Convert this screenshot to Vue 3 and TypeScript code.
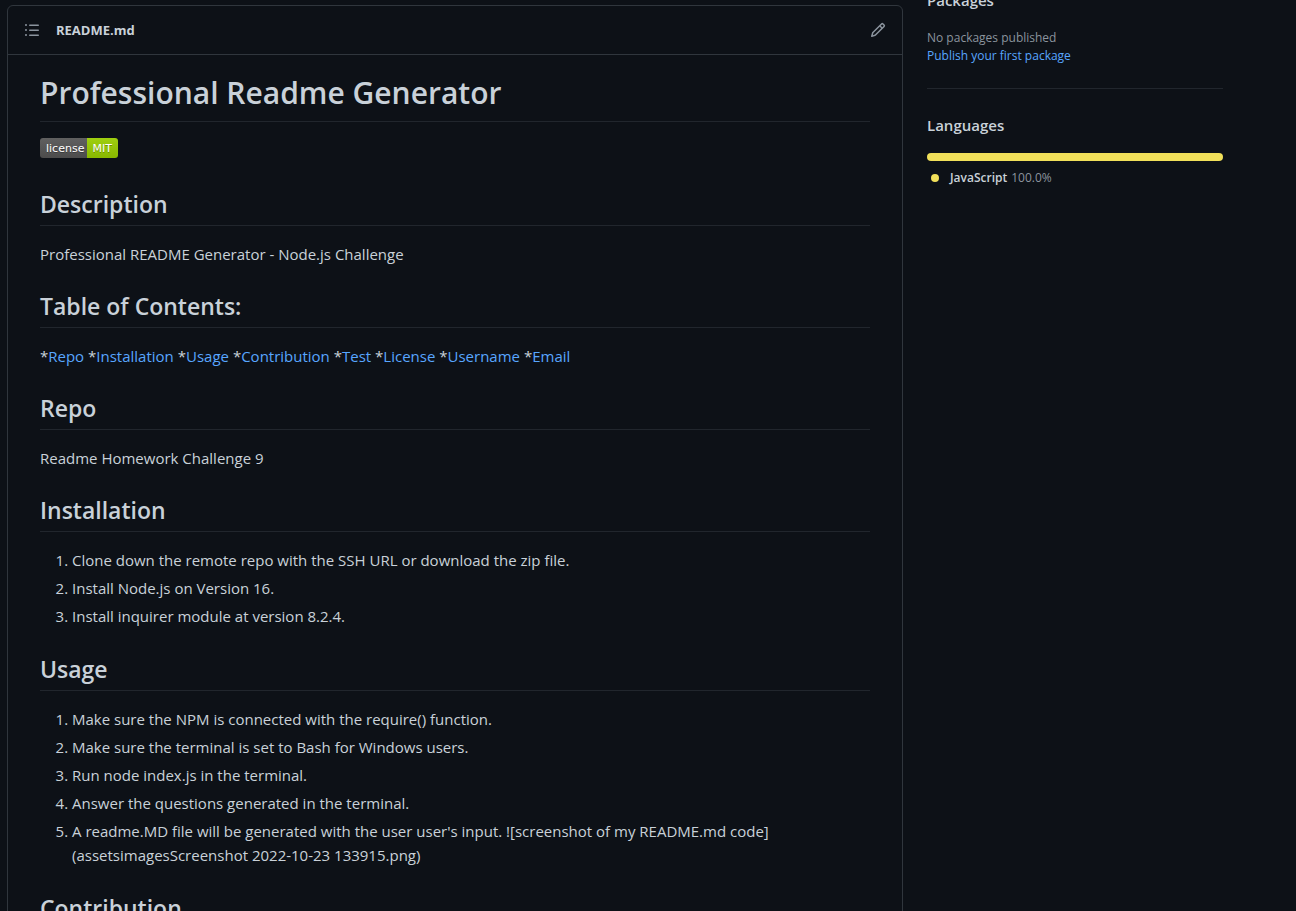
<script setup lang="ts">
interface Section {
  title: string
  text?: string
  toc?: boolean
  steps?: string[]
}

const toc: string[] = ['Repo', 'Installation', 'Usage', 'Contribution', 'Test', 'License', 'Username', 'Email']

const sections: Section[] = [
  { title: 'Description', text: 'Professional README Generator - Node.js Challenge' },
  { title: 'Table of Contents:', toc: true },
  { title: 'Repo', text: 'Readme Homework Challenge 9' },
  {
    title: 'Installation',
    steps: [
      'Clone down the remote repo with the SSH URL or download the zip file.',
      'Install Node.js on Version 16.',
      'Install inquirer module at version 8.2.4.',
    ],
  },
  {
    title: 'Usage',
    steps: [
      'Make sure the NPM is connected with the require() function.',
      'Make sure the terminal is set to Bash for Windows users.',
      'Run node index.js in the terminal.',
      'Answer the questions generated in the terminal.',
      "A readme.MD file will be generated with the user user's input. ![screenshot of my README.md code](assetsimagesScreenshot 2022-10-23 133915.png)",
    ],
  },
  { title: 'Contribution' },
]

const languages = [{ name: 'JavaScript', share: 100 }]
</script>

<template>
  <div class="page">
    <main class="readme">
      <header class="bar">
        <button class="icon-button" type="button" aria-label="Outline">
          <svg width="16" height="16" viewBox="0 0 16 16" fill="currentColor" aria-hidden="true">
            <path d="M2 4a1 1 0 1 0 0-2 1 1 0 0 0 0 2zm3.75-1.5a.75.75 0 0 0 0 1.5h8.5a.75.75 0 0 0 0-1.5h-8.5zm0 5a.75.75 0 0 0 0 1.5h8.5a.75.75 0 0 0 0-1.5h-8.5zm0 5a.75.75 0 0 0 0 1.5h8.5a.75.75 0 0 0 0-1.5h-8.5zM3 8a1 1 0 1 1-2 0 1 1 0 0 1 2 0zm-1 6a1 1 0 1 0 0-2 1 1 0 0 0 0 2z" />
          </svg>
        </button>
        <a class="file" href="#readme">README.md</a>
        <button class="icon-button" type="button" aria-label="Edit this file">
          <svg width="16" height="16" viewBox="0 0 16 16" fill="currentColor" aria-hidden="true">
            <path fill-rule="evenodd" d="M11.013 1.427a1.75 1.75 0 0 1 2.474 0l1.086 1.086a1.75 1.75 0 0 1 0 2.474l-8.61 8.61c-.21.21-.47.364-.756.445l-3.251.93a.75.75 0 0 1-.927-.928l.929-3.25a1.75 1.75 0 0 1 .445-.758l8.61-8.61zm1.414 1.06a.25.25 0 0 0-.354 0L10.811 3.75l1.439 1.44 1.263-1.263a.25.25 0 0 0 0-.354l-1.086-1.086zM11.189 6.25 9.75 4.81l-6.286 6.287a.25.25 0 0 0-.064.108l-.558 1.953 1.953-.558a.249.249 0 0 0 .108-.064l6.286-6.286z" />
          </svg>
        </button>
      </header>
      <article id="readme" class="body">
        <h1>Professional Readme Generator</h1>
        <p class="badges">
          <a class="badge" href="#license"><span class="label">license</span><span class="value">MIT</span></a>
        </p>
        <section v-for="s in sections" :key="s.title">
          <h2>{{ s.title }}</h2>
          <p v-if="s.text">{{ s.text }}</p>
          <p v-if="s.toc">
            <template v-for="t in toc" :key="t">*<a :href="'#' + t.toLowerCase()">{{ t }}</a>{{ ' ' }}</template>
          </p>
          <ol v-if="s.steps">
            <li v-for="step in s.steps" :key="step">{{ step }}</li>
          </ol>
        </section>
      </article>
    </main>
    <aside class="side">
      <section class="packages">
        <h2>Packages</h2>
        <p>No packages published</p>
        <a href="#packages">Publish your first package</a>
      </section>
      <section class="languages">
        <h2>Languages</h2>
        <div class="meter">
          <span v-for="l in languages" :key="l.name" :style="{ width: l.share + '%' }"></span>
        </div>
        <ul>
          <li v-for="l in languages" :key="l.name">
            <i class="dot"></i><b>{{ l.name }}</b><span>{{ l.share.toFixed(1) }}%</span>
          </li>
        </ul>
      </section>
    </aside>
  </div>
</template>

<style>
body {
  margin: 0;
  background: #0d1117;
}
</style>

<style scoped>
* {
  box-sizing: border-box;
}
.page {
  display: flex;
  align-items: flex-start;
  gap: 24px;
  height: 100vh;
  padding: 5px 73px 0 7px;
  overflow: hidden;
  background: #0d1117;
  color: #c9d1d9;
  font-family: "Segoe UI", "Open Sans", "Noto Sans", sans-serif;
  font-size: 15px;
  line-height: 24px;
}
a {
  color: #58a6ff;
  text-decoration: none;
}
h1,
h2,
p,
ol,
ul {
  margin: 0;
  padding: 0;
}
.readme {
  flex: 1;
  min-width: 0;
  border: 1px solid #30363d;
  border-radius: 6px;
}
.bar {
  display: flex;
  align-items: center;
  gap: 16px;
  height: 49px;
  padding: 0 16px;
  border-bottom: 1px solid #30363d;
}
.icon-button {
  display: flex;
  padding: 0;
  border: 0;
  background: none;
  color: #8b949e;
  cursor: pointer;
}
.file {
  flex: 1;
  color: #c9d1d9;
  font-size: 13px;
  font-weight: 700;
}
.body {
  padding: 17px 32px 32px;
}
.body h1 {
  padding-bottom: 7px;
  border-bottom: 1px solid #21262d;
  font-size: 30px;
  font-weight: 600;
  line-height: 42px;
}
.body h2 {
  margin: 24px 0 16px;
  padding-bottom: 5px;
  border-bottom: 1px solid #21262d;
  font-size: 23px;
  font-weight: 600;
  line-height: 32px;
}
.badges {
  display: flex;
  height: 26px;
  margin-top: 16px;
}
.badge {
  display: flex;
  height: 20px;
  border-radius: 3px;
  overflow: hidden;
  color: #fff;
  font: 11px/21px "DejaVu Sans", sans-serif;
  text-shadow: 0 1px 0 rgba(1, 1, 1, 0.3);
}
.label {
  padding: 0 3px 0 6px;
  background: linear-gradient(#606060, #4c4c4c);
}
.value {
  padding: 0 6px 0 5px;
  background: linear-gradient(#9fcf10, #88b800);
}
.body ol {
  margin-bottom: 25px;
  padding-left: 32px;
}
.body ol li + li {
  margin-top: 4px;
}
.side {
  flex: 0 0 296px;
  font-size: 12px;
  line-height: 18px;
}
.side h2 {
  font-size: 15px;
  font-weight: 600;
  line-height: 24px;
}
.packages {
  margin-top: -17px;
  padding-bottom: 23px;
  border-bottom: 1px solid #21262d;
}
.packages h2 {
  margin-bottom: 17px;
}
.packages p,
.languages li span {
  color: #8b949e;
}
.packages a {
  display: block;
}
.languages {
  padding-top: 24px;
}
.meter {
  display: flex;
  height: 8px;
  margin: 16px 0 8px;
  border-radius: 6px;
  overflow: hidden;
}
.meter span {
  background: #f1e05a;
}
.languages ul {
  list-style: none;
}
.languages li {
  display: flex;
  align-items: center;
  gap: 4px;
}
.languages b {
  font-weight: 600;
}
.dot {
  width: 8px;
  height: 8px;
  margin: 0 7px 0 4px;
  border-radius: 50%;
  background: #f1e05a;
}
</style>
